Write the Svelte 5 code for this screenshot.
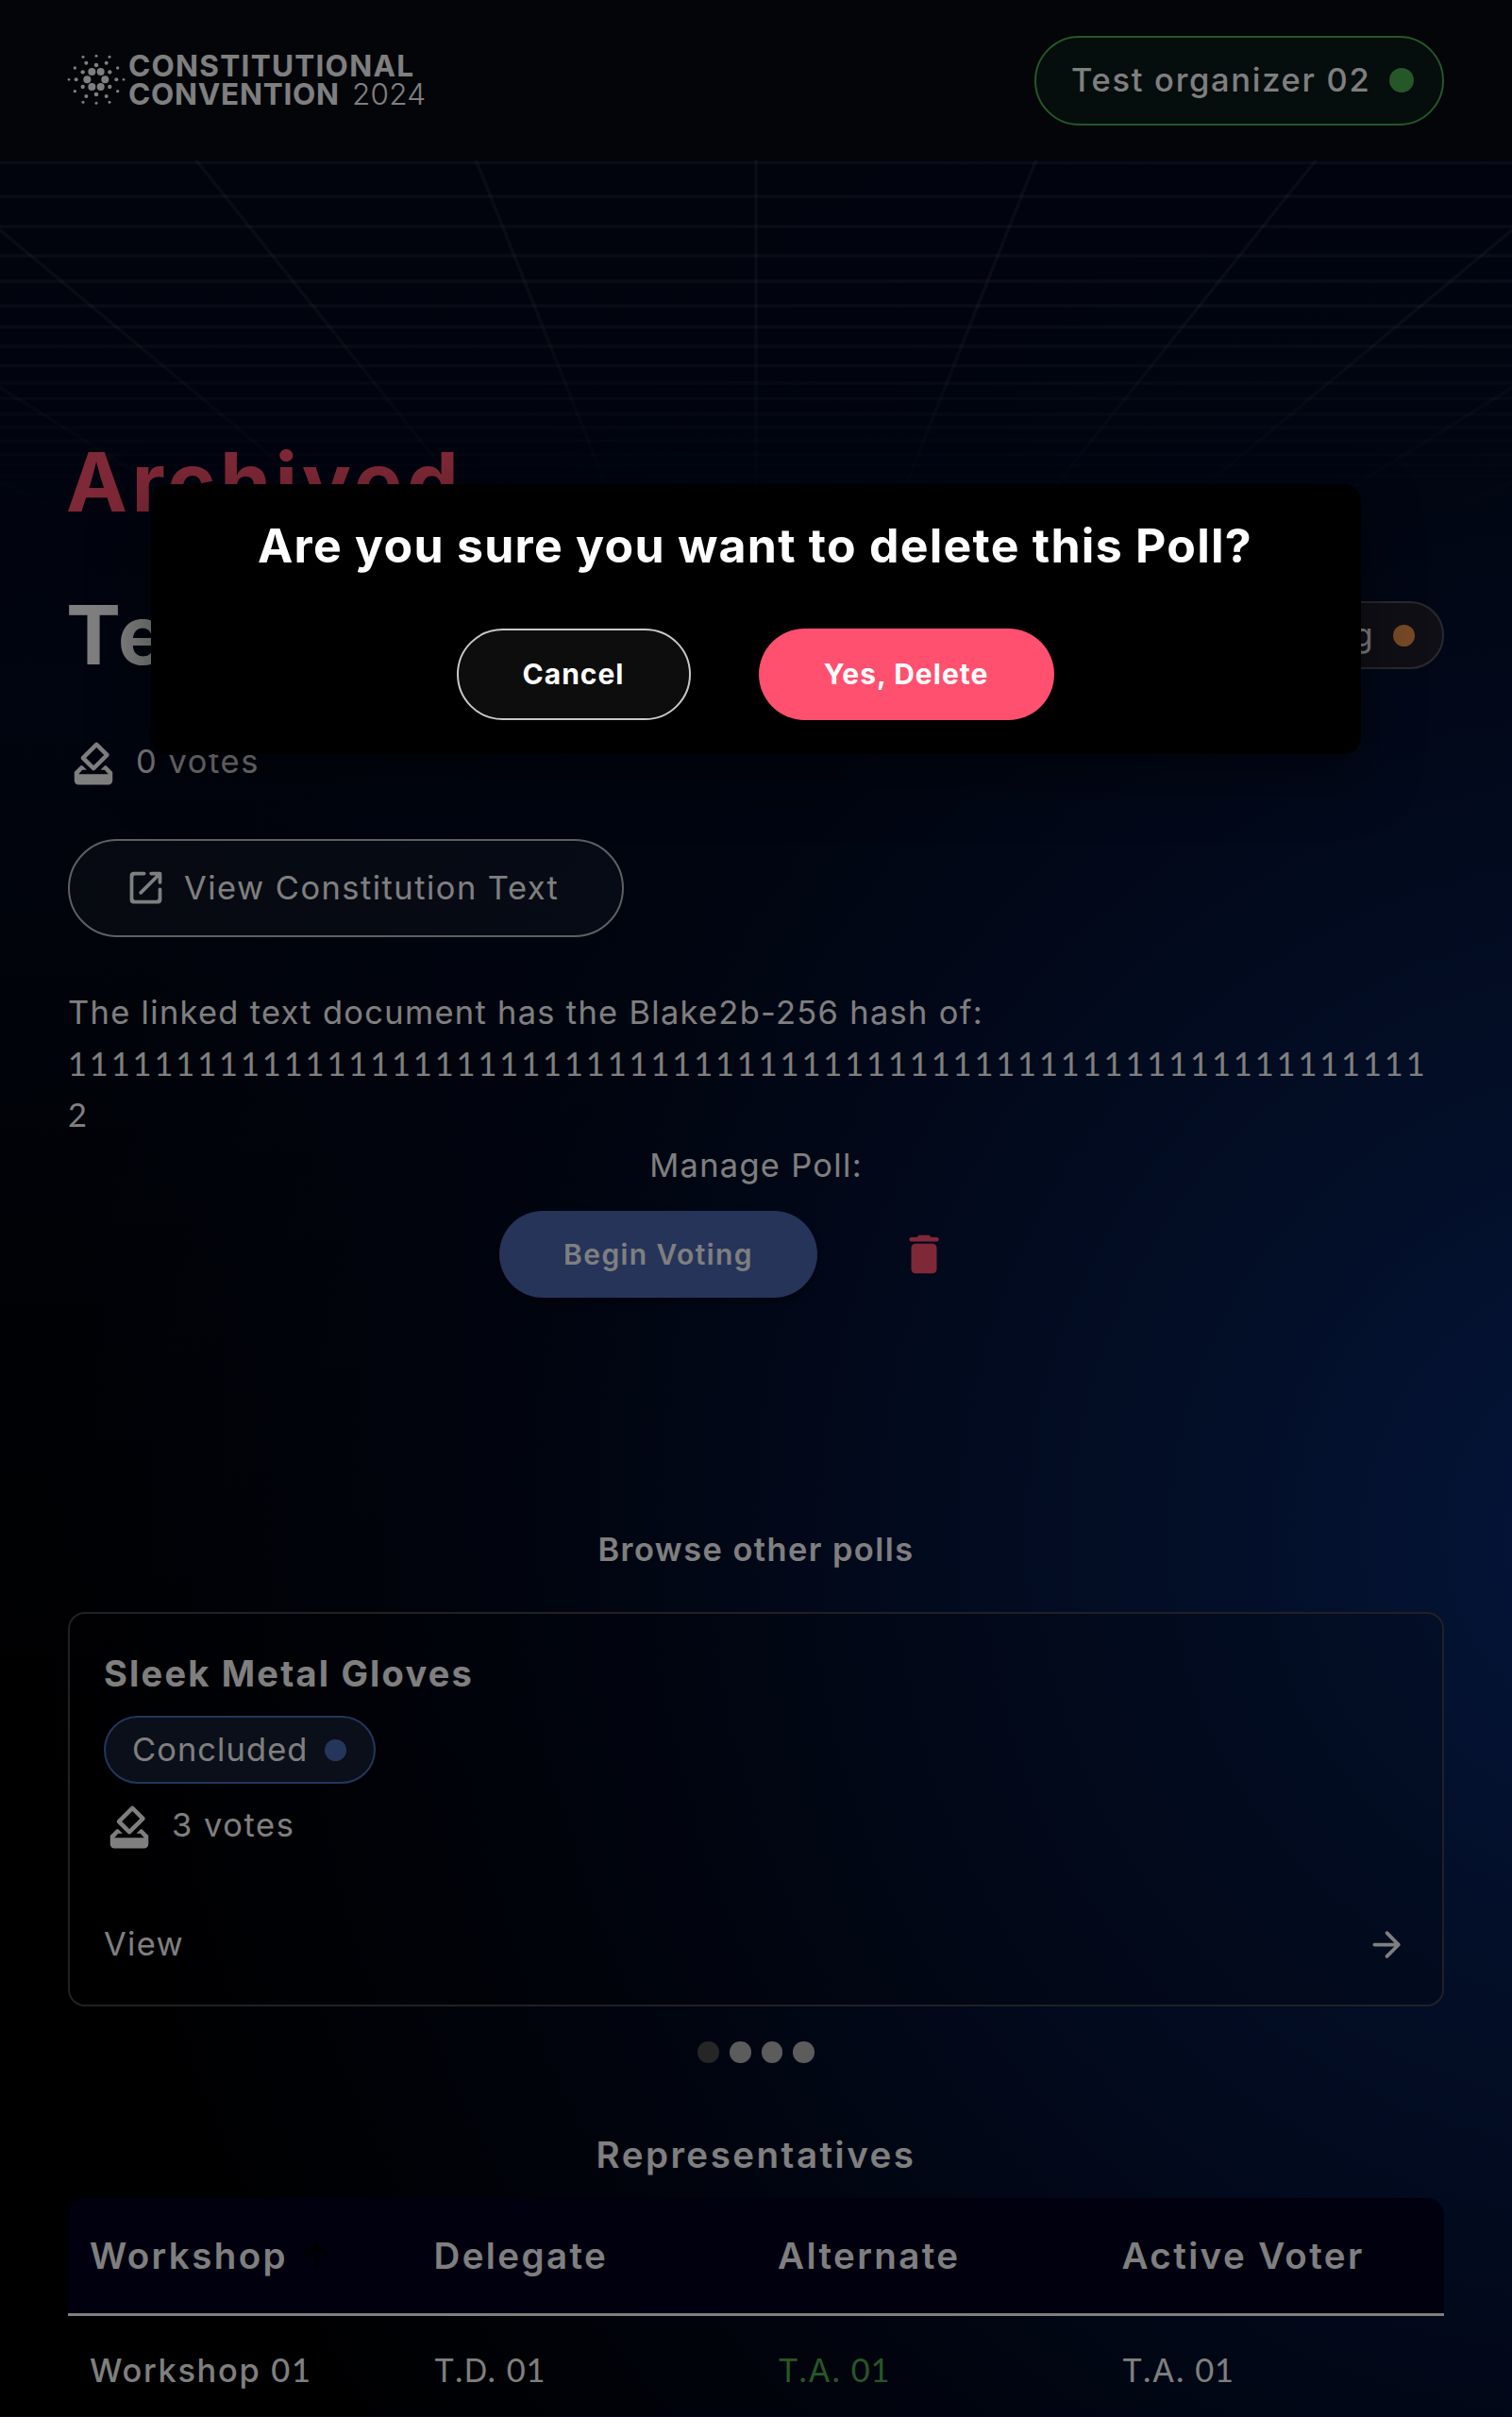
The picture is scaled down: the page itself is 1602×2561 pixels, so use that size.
<script>
  const logoDots = [
    [154, 133, 12], [97, 133, 12], [112, 108, 12], [140, 108, 12], [112, 156, 12], [140, 156, 12],
    [126, 87, 7], [126, 180, 7], [83, 109, 6.5], [169, 109, 6.5], [83, 156, 6.5], [169, 156, 6.5],
    [62, 133, 6], [190, 133, 6], [94, 80, 6], [158, 80, 6], [94, 186, 6], [158, 186, 6],
    [58, 96, 5], [194, 96, 5], [58, 170, 5], [194, 170, 5],
    [84, 61, 4.5], [168, 61, 4.5], [84, 205, 4.5], [168, 205, 4.5],
    [126, 58, 4.5], [126, 208, 4.5], [39, 133, 4], [213, 133, 4]
  ];
  const rows = [3.5, 39, 71, 102, 129, 155, 177.5, 198, 218.5, 237, 253.5, 270, 284, 298, 312.5, 324, 335, 345, 354, 363, 371];
  const rays = [-7, -6, -5, -4, -3, -2, -1, 0, 1, 2, 3, 4, 5, 6, 7];
  const hash = '1'.repeat(63) + '2';
  const columns = ['Workshop', 'Delegate', 'Alternate', 'Active Voter'];
</script>

{#snippet ballot()}
  <svg class="ballot" viewBox="0 0 24 24"><path d="M18 13h-.68l-2 2h1.91L19 17H5l1.78-2h2.05l-2-2H6l-3 3v4c0 1.1.89 2 1.99 2H19c1.1 0 2-.89 2-2v-4l-3-3zm-1-5.05-4.95 4.95-3.54-3.54 4.95-4.95L17 7.95zm-4.24-5.66L6.39 8.66c-.39.39-.39 1.02 0 1.41l4.95 4.95c.39.39 1.02.39 1.41 0l6.36-6.36c.39-.39.39-1.02 0-1.41L14.16 2.3c-.38-.4-1.01-.4-1.4-.01z" /></svg>
{/snippet}

<div class="page">
  <svg class="grid" viewBox="0 0 1602 400">
    {#each rows as y}<line x1="0" x2="1602" y1={y} y2={y} />{/each}
    {#each rays as k}<line x1={801 + k * 296.9} y1="0" x2={801 + k * 136.9} y2="400" />{/each}
  </svg>

  <header>
    <svg class="logo" viewBox="0 0 400 90">
      {#each logoDots as [x, y, r]}<circle cx={x / 3} cy={y / 3} r={r / 3} />{/each}
      <text x="76" y="40.5" textLength="302" class="heavy">CONSTITUTIONAL</text>
      <text x="76" y="71" textLength="223" class="heavy">CONVENTION</text>
      <text x="313" y="71" textLength="78" class="light">2024</text>
    </svg>
    <div class="user"><span>Test organizer 02</span><i class="dot"></i></div>
  </header>

  <main>
    <h1 class="archived">Archived</h1>
    <div class="title-row">
      <h1>Test Poll</h1>
      <div class="status pending"><span>Pending</span><i class="dot"></i></div>
    </div>
    <div class="votes">{@render ballot()}<span>0 votes</span></div>
    <button class="outlined">
      <svg class="open" viewBox="0 0 24 24"><path d="M18 19H6c-.55 0-1-.45-1-1V6c0-.55.45-1 1-1h5c.55 0 1-.45 1-1s-.45-1-1-1H5c-1.11 0-2 .9-2 2v14c0 1.1.9 2 2 2h14c1.1 0 2-.9 2-2v-6c0-.55-.45-1-1-1s-1 .45-1 1v5c0 .55-.45 1-1 1zM14 4c0 .55.45 1 1 1h2.59l-9.13 9.13c-.39.39-.39 1.02 0 1.41.39.39 1.02.39 1.41 0L19 6.41V9c0 .55.45 1 1 1s1-.45 1-1V4c0-.55-.45-1-1-1h-5c-.55 0-1 .45-1 1z" /></svg>
      <span>View Constitution Text</span>
    </button>
    <p class="hash-note">The linked text document has the Blake2b-256 hash of:</p>
    <p class="hash">{hash}</p>
    <p class="manage">Manage Poll:</p>
    <div class="actions">
      <button class="begin">Begin Voting</button>
      <svg class="trash" viewBox="0 0 24 24"><path d="M6 19c0 1.1.9 2 2 2h8c1.1 0 2-.9 2-2V9c0-1.1-.9-2-2-2H8c-1.1 0-2 .9-2 2v10zM18 4h-2.5l-.71-.71c-.18-.18-.44-.29-.7-.29H9.91c-.26 0-.52.11-.7.29L8.5 4H6c-.55 0-1 .45-1 1s.45 1 1 1h12c.55 0 1-.45 1-1s-.45-1-1-1z" /></svg>
    </div>

    <h2 class="browse">Browse other polls</h2>
    <section class="card">
      <h3>Sleek Metal Gloves</h3>
      <div class="status concluded"><span>Concluded</span><i class="dot"></i></div>
      <div class="votes">{@render ballot()}<span>3 votes</span></div>
      <div class="view">
        <span>View</span>
        <svg viewBox="0 0 24 24"><path d="M5 13h11.17l-4.88 4.88c-.39.39-.39 1.03 0 1.42.39.39 1.02.39 1.41 0l6.59-6.59c.39-.39.39-1.02 0-1.41l-6.58-6.6c-.39-.39-1.02-.39-1.41 0-.39.39-.39 1.02 0 1.41L16.17 11H5c-.55 0-1 .45-1 1s.45 1 1 1z" /></svg>
      </div>
    </section>
    <div class="pager"><i class="off"></i><i></i><i></i><i></i></div>

    <h2 class="reps">Representatives</h2>
    <div class="table">
      <div class="tr head">
        {#each columns as name, i}
          <div>
            {name}
            {#if i === 0}<svg class="sort" viewBox="0 0 24 24"><path d="M4 12l1.41 1.41L11 7.83V20h2V7.83l5.58 5.59L20 12l-8-8-8 8z" /></svg>{/if}
          </div>
        {/each}
      </div>
      <div class="tr">
        <div class="strong"><span>Workshop <b>01</b></span></div>
        <div><span>T.D. <b>01</b></span></div>
        <div class="active"><span>T.A. <b>01</b></span></div>
        <div><span>T.A. <b>01</b></span></div>
      </div>
    </div>
  </main>

  <div class="backdrop">
    <div class="modal">
      <h2>Are you sure you want to delete this Poll?</h2>
      <div class="choices">
        <button class="cancel">Cancel</button>
        <button class="confirm">Yes, Delete</button>
      </div>
    </div>
  </div>
</div>

<style>
  :global(body) { background: #000; }
  .page {
    position: relative;
    box-sizing: border-box;
    width: 1602px;
    height: 2561px;
    overflow: hidden;
    border-bottom: 1px solid #06061a;
    color: #fff;
    font: 400 34.4px/54px Inter, 'Liberation Sans', sans-serif;
    letter-spacing: 1.33px;
    background:
      radial-gradient(ellipse 1700px 1700px at 1740px 1630px, #0a2a78 0%, #071f54 24%, #041236 50%, rgba(3, 11, 36, 0.8) 70%, transparent 100%),
      linear-gradient(#02061a 0, #020a1e 30%, #01040c 52%, #000 75%);
  }
  h1, h2, h3, p { margin: 0; font-weight: 400; }
  button { font: inherit; color: inherit; letter-spacing: inherit; padding: 0; margin: 0; border: 0; }
  svg { display: block; fill: currentColor; }
  .dot { display: block; border-radius: 50%; flex: none; }

  .grid {
    position: absolute;
    top: 169px;
    left: 0;
    width: 1602px;
    height: 400px;
    mask-image: linear-gradient(#000 40%, transparent 96%);
  }
  .grid line { stroke: rgba(255, 255, 255, 0.07); stroke-width: 3.5; }

  header {
    position: relative;
    box-sizing: border-box;
    height: 169px;
    padding: 0 72px 0 60px;
    display: flex;
    align-items: center;
    justify-content: space-between;
    background: #060a12;
  }
  .logo { width: 400px; height: 90px; }
  .logo text { font-size: 31.5px; letter-spacing: 0; }
  .heavy { font-weight: 700; }
  .light { font-weight: 300; }
  .user {
    box-sizing: border-box;
    width: 434px;
    height: 95px;
    margin-top: 1px;
    padding: 0 30px 1px 37px;
    display: flex;
    align-items: center;
    justify-content: space-between;
    border: 2px solid #4caf50;
    border-radius: 48px;
    background: #0a1a1a;
    font-weight: 500;
    letter-spacing: 1.75px;
  }
  .user .dot { width: 26px; height: 26px; background: #4caf50; }

  main { position: relative; padding: 288px 72px 0; }
  h1 { font-size: 87px; line-height: 108px; font-weight: 700; letter-spacing: 3.5px; }
  .archived { color: #ff506f; margin-left: -2px; letter-spacing: 4.5px; }
  .title-row { margin-top: 54px; display: flex; align-items: center; justify-content: space-between; }
  .title-row h1 { margin-left: -2px; }
  .status {
    box-sizing: border-box;
    height: 72px;
    display: flex;
    align-items: center;
    border: 2px solid #4c6bb8;
    border-radius: 36px;
  }
  .status .dot { width: 23px; height: 23px; }
  .pending { padding: 0 29px; border-color: #54545c; background: #201e2c; }
  .pending .dot { background: #f0934c; margin-left: 20px; }
  .concluded {
    width: 288px;
    margin-top: 14px;
    padding: 0 29px 0 28px;
    justify-content: space-between;
    background: #141e34;
    letter-spacing: 1.1px;
  }
  .concluded .dot { background: #4c6bb8; }

  .votes { height: 54px; display: flex; gap: 18px; line-height: 50px; letter-spacing: 1.6px; }
  main > .votes { margin-top: 55px; }
  .ballot { width: 54px; height: 54px; }
  .outlined {
    box-sizing: border-box;
    width: 589px;
    height: 104px;
    margin-top: 53px;
    padding: 0 0 1px 58px;
    display: flex;
    align-items: center;
    gap: 18px;
    border: 2px solid #bfbfc4;
    border-radius: 53px;
    background: rgba(255, 255, 255, 0.05);
    letter-spacing: 1.5px;
  }
  .open { width: 45px; height: 45px; }
  .hash-note { margin-top: 53px; }
  .hash { font-family: Lato, sans-serif; letter-spacing: 2.92px; word-break: break-all; }
  .manage { text-align: center; }
  .actions { margin-top: 21px; padding-left: 457px; display: flex; align-items: center; gap: 86px; }
  .begin {
    width: 337px;
    height: 92px;
    border-radius: 46px;
    background: #4c68b4;
    box-shadow: 0 4px 8px rgba(0, 0, 0, 0.4);
    font-size: 30px;
    font-weight: 600;
    letter-spacing: 1.4px;
  }
  .trash { width: 54px; height: 54px; fill: #ff506f; }

  .browse { margin-top: 240px; text-align: center; font-size: 34.4px; font-weight: 600; letter-spacing: 1.45px; }
  .card {
    box-sizing: border-box;
    height: 418px;
    margin-top: 39px;
    padding: 33px 36px 0;
    border: 2px solid #404348;
    border-radius: 18px;
    background: rgba(0, 0, 0, 0.2);
  }
  h3 { font-size: 38px; line-height: 61px; font-weight: 700; letter-spacing: 2.2px; }
  .card .votes { margin-top: 19px; }
  .view { margin-top: 70px; display: flex; align-items: center; justify-content: space-between; }
  .view svg { width: 45px; height: 45px; }
  .pager { margin-top: 37px; height: 23px; display: flex; justify-content: center; gap: 11px; }
  .pager i { width: 22.7px; height: 22.7px; border-radius: 50%; background: #b8b8b8; }
  .pager .off { background: #4c4c4c; }

  .reps { margin-top: 67px; font-size: 38.5px; line-height: 61px; font-weight: 600; letter-spacing: 2.5px; text-align: center; }
  .table { margin-top: 15px; }
  .tr { display: grid; grid-template-columns: repeat(4, 1fr); height: 115px; letter-spacing: 0.7px; }
  .tr > div { padding-left: 23px; display: flex; align-items: center; }
  .head {
    height: 122px;
    font-size: 38.5px;
    font-weight: 600;
    letter-spacing: 2.4px;
    background: #00001c;
    border-bottom: 3px solid #fff;
    border-radius: 18px 18px 0 0;
  }
  .sort { width: 42px; height: 42px; margin-left: 9px; fill: #000; }
  .tr .strong { font-weight: 500; letter-spacing: 1.7px; }
  .active { color: #4caf50; }
  b { font-family: Lato, sans-serif; font-weight: inherit; }

  .backdrop { position: absolute; inset: 0; background: rgba(0, 0, 0, 0.5); }
  .modal {
    position: absolute;
    box-sizing: border-box;
    left: 160px;
    top: 513px;
    width: 1282px;
    height: 286px;
    padding: 32px 2px 0 0;
    border-radius: 18px;
    background: #000;
    box-shadow: 0 24px 54px 10px rgba(0, 0, 0, 0.35);
    text-align: center;
  }
  .modal h2 { font-size: 50px; line-height: 66px; font-weight: 700; letter-spacing: 1.25px; }
  .choices { margin-top: 55px; display: flex; justify-content: center; gap: 72px; }
  .choices button {
    box-sizing: border-box;
    height: 97px;
    padding-bottom: 2px;
    border-radius: 49px;
    font-size: 30px;
    font-weight: 700;
    letter-spacing: 1px;
  }
  .choices .cancel { width: 248px; border: 2px solid #c8c8c8; background: #0d0d0d; }
  .choices .confirm { width: 313px; background: #ff506f; }
</style>
